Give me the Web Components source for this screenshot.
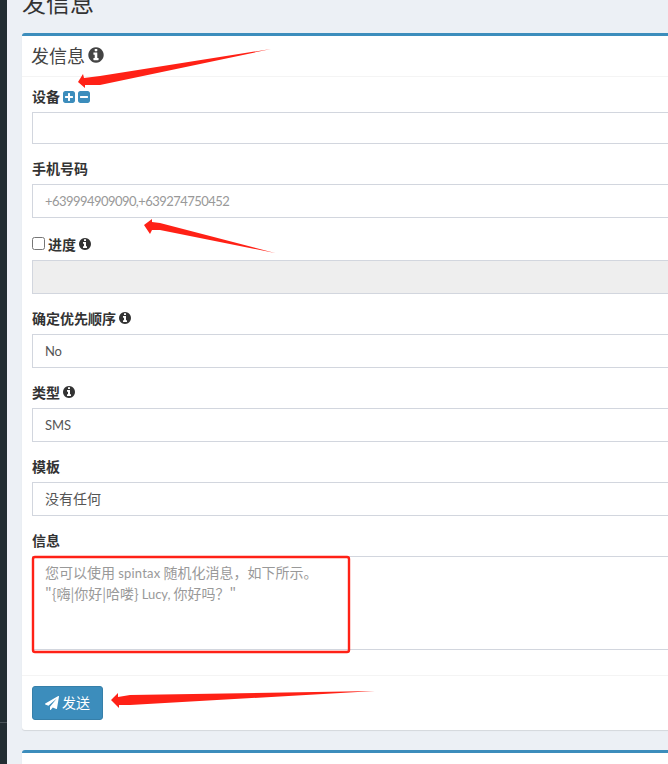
<!DOCTYPE html>
<html lang="zh"><head><meta charset="utf-8"><title>发信息</title>
<style>
html,body{margin:0;padding:0;height:764px;overflow:hidden;background:#ecf0f5}
body{font-family:"Noto Sans CJK SC","Noto Sans",sans-serif;color:#333}
</style></head><body>
<sms-page></sms-page>
<script>
const FA={
 info:'M1152 1376v-160q0-14-9-23t-23-9h-96v-512q0-14-9-23t-23-9h-320q-14 0-23 9t-9 23v160q0 14 9 23t23 9h96v320h-96q-14 0-23 9t-9 23v160q0 14 9 23t23 9h448q14 0 23-9t9-23zm-128-896v-160q0-14-9-23t-23-9h-192q-14 0-23 9t-9 23v160q0 14 9 23t23 9h192q14 0 23-9t9-23zm640 416q0 209-103 385.5t-279.5 279.5-385.5 103-385.5-103-279.5-279.5-103-385.5 103-385.5 279.5-279.5 385.5-103 385.5 103 279.5 279.5 103 385.5z',
 plus:'M1408 960v-128q0-26-19-45t-45-19h-320v-320q0-26-19-45t-45-19h-128q-26 0-45 19t-19 45v320h-320q-26 0-45 19t-19 45v128q0 26 19 45t45 19h320v320q0 26 19 45t45 19h128q26 0 45-19t19-45v-320h320q26 0 45-19t19-45zm256-544v960q0 119-84.5 203.5t-203.5 84.5h-960q-119 0-203.5-84.5t-84.5-203.5v-960q0-119 84.5-203.5t203.5-84.5h960q119 0 203.5 84.5t84.5 203.5z',
 minus:'M1408 960v-128q0-26-19-45t-45-19h-896q-26 0-45 19t-19 45v128q0 26 19 45t45 19h896q26 0 45-19t19-45zm256-544v960q0 119-84.5 203.5t-203.5 84.5h-960q-119 0-203.5-84.5t-84.5-203.5v-960q0-119 84.5-203.5t203.5-84.5h960q119 0 203.5 84.5t84.5 203.5z',
 plane:'M1764 11q33 24 27 64l-256 1536q-5 29-32 45-14 8-31 8-11 0-24-5l-453-185-242 295q-18 23-49 23-13 0-22-4-19-7-30.5-23.5t-11.5-36.5v-349l864-1059-1069 925-395-162q-37-14-40-55-2-40 32-59l1664-960q15-9 32-9 20 0 36 11z'
};
function def(name,css,html){
 customElements.define(name,class extends HTMLElement{
  constructor(){super();const r=this.attachShadow({mode:'open'});r.innerHTML='<style>'+css+'</style>'+html;}
 });
}
class FaIcon extends HTMLElement{
 connectedCallback(){
  const r=this.shadowRoot||this.attachShadow({mode:'open'});
  const s=this.getAttribute('size')||14;
  r.innerHTML=`<style>:host{display:inline-flex;line-height:0;color:inherit}svg{display:block}</style><svg width="${s}" height="${s}" viewBox="0 0 1792 1792"><path fill="currentColor" d="${FA[this.getAttribute('name')]}"/></svg>`;
 }
}
customElements.define('fa-icon',FaIcon);

def('sms-card',
 `:host{display:block;background:#fff;border-top:3px solid #3c8dbc;border-radius:3px;box-shadow:0 1px 1px rgba(0,0,0,.1);width:720px}
  .head{height:41px;box-sizing:border-box;padding:0 9px 3px;display:flex;align-items:center;border-bottom:1px solid #f4f4f4;font-size:18px;line-height:1;color:#444;gap:2px}
  .body{padding:9px 10px 25px}
  .foot{border-top:1px solid #f4f4f4;padding:10px}`,
 `<div class="head"><slot name="title"></slot></div><div class="body"><slot></slot></div><div class="foot"><slot name="footer"></slot></div>`);

def('sms-field',
 `:host{display:block;margin-bottom:15px}
  .label{display:flex;align-items:center;gap:2px;box-sizing:border-box;height:var(--label-h,20px);padding-bottom:var(--label-pb,2px);margin-bottom:5px;font-size:14px;font-weight:700;color:#333;line-height:20px}`,
 `<div class="label"><slot name="label"></slot></div><slot></slot>`);

def('sms-box',
 `:host{display:flex;align-items:center;box-sizing:border-box;height:34px;border:1px solid #d2d6de;background:#fff;padding:0 12px;
   font:14px/20px "Noto Sans CJK SC",sans-serif;color:#555}
  :host([disabled]){background:#eee}
  :host([placeholder]){color:#999}
  :host([cjk]){padding-bottom:2px}
  :host([multi]){display:block;height:94px;padding:5px 12px}`,
 `<slot></slot>`);

def('sms-latin',
 `:host{font-family:Lato,"Noto Sans CJK SC",sans-serif;font-size:13px;letter-spacing:var(--ls,-.1px)}`,`<slot></slot>`);

def('sms-check',
 `:host{display:inline-block;box-sizing:border-box;width:13px;height:13px;border:1px solid #767676;border-radius:2.5px;background:#fff;margin:0 1px 2px 0}`,``);

def('sms-button',
 `:host{display:inline-flex;align-items:center;box-sizing:border-box;height:34px;padding:0 12px 0 12px;gap:3px;background:#3c8dbc;border:1px solid #367fa9;border-radius:3px;color:#fff;font-size:14px}
  ::slotted(span){padding-bottom:2px}`,
 `<slot></slot>`);

def('sms-annotations',
 `:host{position:absolute;left:0;top:0;width:668px;height:764px;pointer-events:none}svg{display:block}`,
 `<svg width="668" height="764" viewBox="0 0 668 764">
   <polygon fill="#ff2116" points="271,49 100,76 84,78 83,74 78,82 85,88 85,85 100,85"/>
   <polygon fill="#ff2116" points="275,253 160,223 152,222 152,219 144,225 150,234 152,230 160,230"/>
   <polygon fill="#ff2116" points="375,691 130,695 118,697 118,693 111,700 119,708 119,705 130,705"/>
   <rect x="33" y="557" width="316" height="95" rx="2" fill="none" stroke="#ff2116" stroke-width="2.4"/>
 </svg>`);

def('sms-page',
 `:host{display:flex;width:668px;height:764px;overflow:hidden;position:relative;background:#ecf0f5}
  .side{flex:0 0 7px;background:#222d32;display:flex;flex-direction:column}
  .side i{display:block;height:1px;background:#4a5459;margin-top:722px}
  .main{flex:1;min-width:0;padding:0 0 0 15px;margin-top:-17px;overflow:hidden}
  h1{margin:0 0 13px;font-size:24px;font-weight:400;line-height:37px;color:#333}
  sms-card{margin-bottom:20px}`,
 `<div class="side"><i></i></div>
  <div class="main">
   <h1>发信息</h1>
   <sms-card>
    <span slot="title">发信息</span><fa-icon slot="title" name="info" size="18"></fa-icon>
    <sms-field style="--label-h:21px"><span slot="label">设备</span>
      <fa-icon slot="label" name="plus" size="14" style="color:#3c8dbc;margin-top:2px"></fa-icon><fa-icon slot="label" name="minus" size="14" style="color:#3c8dbc;margin:2px 0 0 -1px"></fa-icon>
      <sms-box style="height:32px"></sms-box></sms-field>
    <sms-field><span slot="label">手机号码</span>
      <sms-box placeholder><sms-latin style="--ls:-.55px">+639994909090,+639274750452</sms-latin></sms-box></sms-field>
    <sms-field style="--label-h:22px;--label-pb:0px"><sms-check slot="label"></sms-check><span slot="label">进度</span><fa-icon slot="label" name="info" size="14"></fa-icon>
      <sms-box disabled></sms-box></sms-field>
    <sms-field><span slot="label">确定优先顺序</span><fa-icon slot="label" name="info" size="14"></fa-icon>
      <sms-box><sms-latin>No</sms-latin></sms-box></sms-field>
    <sms-field><span slot="label">类型</span><fa-icon slot="label" name="info" size="14"></fa-icon>
      <sms-box><sms-latin>SMS</sms-latin></sms-box></sms-field>
    <sms-field><span slot="label">模板</span>
      <sms-box cjk>没有任何</sms-box></sms-field>
    <sms-field style="margin-bottom:0"><span slot="label">信息</span>
      <sms-box multi placeholder>您可以使用 <sms-latin style="--ls:.2px">spintax</sms-latin> 随机化消息，如下所示。<br>"{嗨|你好|哈喽} <sms-latin>Lucy,</sms-latin> 你好吗？"</sms-box></sms-field>
    <sms-button slot="footer"><fa-icon name="plane" size="14"></fa-icon><span>发送</span></sms-button>
   </sms-card>
   <sms-card><span slot="title" style="padding-top:20px;padding-left:4px">已发送消息（排队，待发送）的</span></sms-card>
  </div>
  <sms-annotations></sms-annotations>`);
</script>
</body></html>
